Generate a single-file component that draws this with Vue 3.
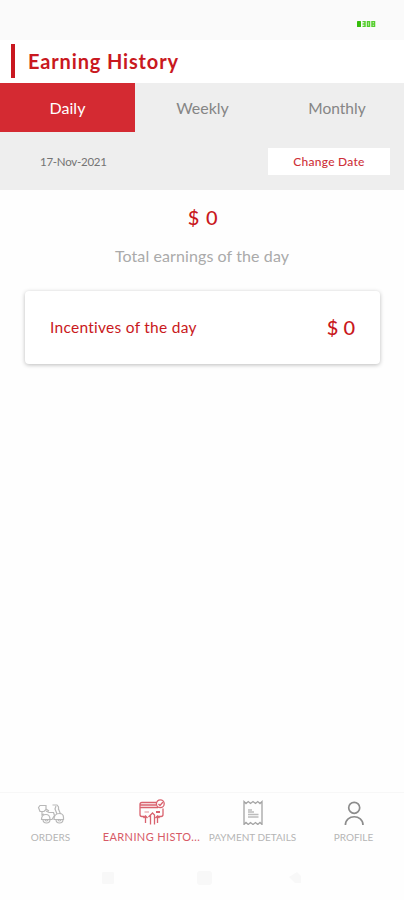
<script setup>
const tabs = ['Daily', 'Weekly', 'Monthly']
const active = 'Daily'
</script>

<template>
  <div class="screen">
    <div class="status">
      <svg class="battery" width="19" height="6" viewBox="0 0 19 6">
        <rect width="4" height="6" rx=".6" fill="#35bd0b" />
        <path d="M5.500 .5h2.500v5H5.500M5.500 3H8M10.500 .5h2v5h-2zM15 .5h2.500v5H15zM15 3h2.500" fill="none" stroke="#54ce2c" stroke-width="1.500" />
      </svg>
    </div>
    <header class="header">
      <span class="marker"></span>
      <h1 class="title">Earning History</h1>
    </header>
    <section class="filters">
      <div class="tabs">
        <div v-for="tab in tabs" :key="tab" class="tab" :class="{ active: tab === active }">
          <span :class="tab.toLowerCase()">{{ tab }}</span>
        </div>
      </div>
      <div class="dates">
        <span class="date">17-Nov-2021</span>
        <button class="change"><span>Change Date</span></button>
      </div>
    </section>
    <main class="content">
      <div class="total">$ 0</div>
      <div class="caption">Total earnings of the day</div>
      <div class="card">
        <span class="incentive">Incentives of the day</span>
        <span class="amount">$ 0</span>
      </div>
    </main>
    <nav class="nav">
      <div class="item">
        <svg class="icon" width="28" height="26" viewBox="0 0 28 26" fill="none" stroke="#b8b8b8" stroke-width="1.200">
          <path d="M1.500 8.500 3 6.500h6v4l-2 2H3zM9 12l3 1.500h5M5 13v3l2-1M9 10l3 2M15.500 6H20l1.500 2v3M19 7l-1 3 2 5M21.500 10l2 5M16.500 13.500l1 3-2.500 4h-2" />
          <path d="M4.500 20.500c0-3.500 2-5 4.500-5s4 2 4 5zM17 20.500c0-4 2.500-6 5.500-6 2.500 0 4 1.500 4 4v2z" />
          <path d="M6 20.500a3.500 3.500 0 0 0 7 0M19 20.500a3.500 3.500 0 0 0 7 0M8 20.500a1.500 1.500 0 0 0 3 0M21 20.500a1.500 1.500 0 0 0 3 0" />
        </svg>
        <span class="label orders">ORDERS</span>
      </div>
      <div class="item current">
        <svg class="icon" width="28" height="26" viewBox="0 0 28 26" fill="none" stroke="#d9626e" stroke-width="1.300">
          <path d="M6.500 17.500H4c-1.500 0-2-.5-2-2V5.500C2 4 2.500 3.500 4 3.500h14M2 6h16M2 8.500h18M25 9.500v6c0 1.500-.5 2-2 2h-3" />
          <circle cx="22.300" cy="4.800" r="3.900" /><path d="m20.500 5 1.500 1.500 3-3.500" /><path d="M18 13h4" stroke-width="2" />
          <path d="M7.500 24v-7M5.500 19l2-2 2 2M12.500 25.500V16l2-2 2 2v9.500M10.500 18l2-2M19.500 24v-7M17.500 19l2-2 2 2" />
          <path d="M6.500 13h4.500" stroke="#e9a7ad" />
        </svg>
        <span class="label earning">EARNING HISTO...</span>
      </div>
      <div class="item">
        <svg class="icon" width="28" height="26" viewBox="0 0 28 26" fill="none" stroke="#a4a4a4" stroke-width="1.300">
          <path d="M5 2.500 7 4.500l2.250-2 2.250 2 2.500-2 2.500 2 2.250-2 2.250 2 2-2v23L21 23.500l-2.250 2-2.250-2-2.500 2-2.500-2-2.250 2-2.250-2-2 2z" />
          <path d="M9 11h4M9 13h6M9 15.500h10.500M9 18h10.500" stroke="#bcbcbc" />
        </svg>
        <span class="label payment">PAYMENT DETAILS</span>
      </div>
      <div class="item">
        <svg class="icon" width="28" height="26" viewBox="0 0 28 26" fill="none" stroke="#8c8c8c" stroke-width="1.700">
          <circle cx="14.200" cy="8.800" r="5.500" /><path d="M5.400 26c0-11 17.600-11 17.600 0" />
        </svg>
        <span class="label profile">PROFILE</span>
      </div>
    </nav>
    <div class="system">
      <svg width="404" height="34" viewBox="0 0 404 34" fill="#f8f8f8">
        <rect x="102" y="10" width="12" height="12" rx="1" /><rect x="197" y="9" width="15" height="14" rx="3" /><path d="m289 15 8-5 4 4v7h-6z" />
      </svg>
    </div>
  </div>
</template>

<style>
body { margin: 0; background: #fefefe; }
</style>
<style scoped>
.screen { width: 404px; height: 900px; box-sizing: border-box; overflow: hidden; display: flex; flex-direction: column; background: #fefefe; color: #c91820; font-family: Lato, sans-serif; }
.screen span { white-space: nowrap; }
.status { height: 40px; flex: none; background: #fafafa; display: flex; justify-content: flex-end; box-sizing: border-box; padding: 21px 28px 0 0; }
.header { height: 43px; flex: none; display: flex; align-items: center; background: #fff; padding-left: 11px; }
.marker { width: 4px; height: 34px; background: #c91820; margin-right: 13px; margin-bottom: 5px; margin-top: 4px; }
.title { margin: 0 0 2px; font-size: 20px; line-height: 24px; letter-spacing: .85px; font-weight: 700; white-space: nowrap; }
.filters { height: 107px; flex: none; background: #eee; }
.tabs { display: grid; grid-template-columns: 135px 135px 134px; height: 49px; }
.tab { display: flex; align-items: center; justify-content: center; color: #858585; font-size: 16px; }
.monthly { font-size: 15.500px; }
.active { background: #d42a32; color: #fff; }
.dates { display: flex; justify-content: space-between; align-items: center; padding: 0 14px 0 40px; height: 58px; }
.date { color: #747474; font-size: 11.500px; letter-spacing: -.25px; }
.change { border: 0; padding: 0; width: 122px; height: 27px; background: #fff; color: #ce3038; font-family: inherit; font-size: 12px; font-weight: 500; letter-spacing: .25px; }
.content { flex: 1; display: flex; flex-direction: column; align-items: center; }
.total, .amount { font-size: 20px; line-height: 24px; font-weight: 500; }
.total { margin-top: 15px; padding-left: 2px; letter-spacing: .8px; }
.caption { color: #aaa; font-size: 16px; line-height: 20px; margin-top: 17px; letter-spacing: .1px; white-space: nowrap; }
.card { width: 355px; height: 73px; box-sizing: border-box; margin: 25px 0 0 1px; padding: 0 25px 2px; display: flex; justify-content: space-between; align-items: center; background: #fff; border-radius: 4px; box-shadow: 0 1px 4px #0004; }
.incentive { font-size: 15.500px; letter-spacing: .27px; }
.nav { height: 59px; flex: none; border-top: 1px solid #f7f7f7; display: grid; grid-template-columns: repeat(4, 101px); }
.item { display: flex; flex-direction: column; align-items: center; padding-top: 6px; color: #b5b5b5; }
.icon { height: 26px; flex: none; }
.label { font-size: 10px; line-height: 12px; margin-top: 6px; font-weight: 400; }
.current { color: #d75a66; }
.earning { font-size: 11px; letter-spacing: .38px; }
.system { height: 48px; flex: none; padding-top: 10px; box-sizing: border-box; }
</style>
